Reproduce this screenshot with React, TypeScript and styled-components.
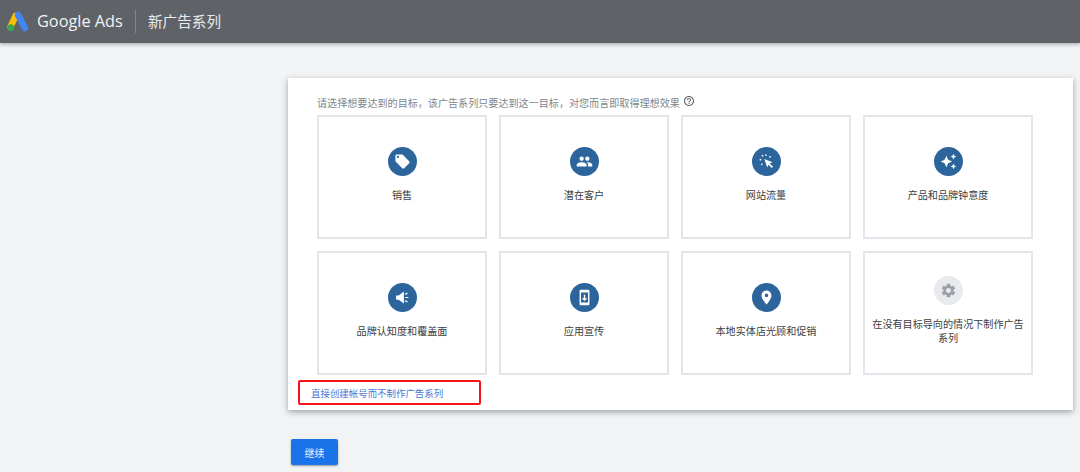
import React from "react";
import styled, { createGlobalStyle } from "styled-components";
import {
  MdLocalOffer,
  MdPeople,
  MdAutoAwesome,
  MdSystemUpdate,
  MdPlace,
  MdSettings,
  MdHelpOutline,
} from "react-icons/md";

const FONT = `Roboto, "Noto Sans CJK SC", sans-serif`;

const Global = createGlobalStyle`
  html, body { margin: 0; padding: 0; height: 100%; background: #f1f3f5; overflow: hidden; }
  body { font-family: ${FONT}; }
`;

const Page = styled.div`
  width: 1080px;
  height: 472px;
  overflow: hidden;
  background: #f1f3f5;
`;

const Header = styled.header`
  height: 43px;
  background: #5f6368;
  display: flex;
  align-items: center;
  padding-left: 7px;
  box-sizing: border-box;
  box-shadow: 0 1px 4px rgba(60, 64, 67, 0.45);
`;

const Logo = styled.svg`
  width: 22px;
  height: 21px;
  margin-right: 8px;
  margin-top: -1px;
`;

const Brand = styled.span`
  color: #f1f3f4;
  font-family: "Open Sans", ${FONT};
  font-size: 16.3px;
  line-height: 20px;
  width: 98px;
  white-space: nowrap;
  margin-top: -1px;
`;

const Divider = styled.div`
  width: 1px;
  height: 23px;
  background: #80868b;
  margin-right: 12px;
`;

const Title = styled.h1`
  margin: 0;
  color: #e8eaed;
  font-size: 14.6px;
  font-weight: 400;
  line-height: 20px;
  white-space: nowrap;
`;

const Main = styled.main`
  padding: 35px 0 0 288px;
`;

const Panel = styled.section`
  width: 785px;
  height: 332px;
  box-sizing: border-box;
  background: #fff;
  padding: 15px 0 0 10px;
  box-shadow: 0 2px 6px rgba(60, 64, 67, 0.45);
`;

const Prompt = styled.p`
  box-sizing: border-box;
  margin: 0 0 0 19px;
  height: 22px;
  padding-bottom: 4px;
  display: flex;
  align-items: center;
  gap: 3px;
  color: #80868b;
  font-size: 10.08px;
  white-space: nowrap;
  svg {
    width: 12px;
    height: 12px;
    color: #5f6368;
    margin-top: -2px;
  }
`;

const Grid = styled.div`
  margin: 0 0 0 19px;
  width: 716px;
  display: grid;
  grid-template-columns: repeat(4, 170px);
  grid-auto-rows: 124px;
  gap: 12px;
`;

const Tile = styled.button`
  box-sizing: border-box;
  border: 2px solid #e3e4ea;
  background: #fff;
  padding: 0 6px 5px;
  display: flex;
  flex-direction: column;
  align-items: center;
  justify-content: center;
  gap: 13px;
  font-family: ${FONT};
`;

const Badge = styled.span<{ $muted?: boolean }>`
  width: 29px;
  height: 29px;
  border-radius: 50%;
  flex: none;
  display: flex;
  align-items: center;
  justify-content: center;
  background: ${(p) => (p.$muted ? "#e8eaed" : "#2c659c")};
  color: ${(p) => (p.$muted ? "#9aa0a6" : "#fff")};
  svg {
    width: 17px;
    height: 17px;
  }
`;

const Label = styled.span`
  font-size: 10.1px;
  line-height: 14px;
  color: #3c4043;
  text-align: center;
`;

const LinkBox = styled.div`
  box-sizing: border-box;
  width: 183px;
  height: 25px;
  margin-top: 5px;
  padding-left: 11px;
  border: 2px solid #f5141a;
  border-radius: 2px;
  display: flex;
  align-items: center;
`;

const TextLink = styled.a`
  color: #4a76d4;
  font-size: 9.45px;
  white-space: nowrap;
  cursor: pointer;
`;

const Continue = styled.button`
  display: block;
  width: 47px;
  height: 26px;
  margin: 29px 0 0 3px;
  border: none;
  border-radius: 2px;
  background: #1a73e8;
  color: #e8f0fe;
  font-family: ${FONT};
  font-size: 10px;
  box-shadow: 0 1px 2px rgba(60, 64, 67, 0.5);
`;

const ClickIcon = () => (
  <svg viewBox="0 0 24 24" fill="currentColor" aria-hidden="true">
    <path d="M9 8.5 20.5 13l-4 1.8 4.7 4.7-1.7 1.7-4.7-4.7-1.8 4z" />
    <circle cx="3.4" cy="9.4" r="1.2" />
    <circle cx="5.4" cy="16" r="1.2" />
    <circle cx="6.4" cy="3.8" r="1.2" />
    <circle cx="11.2" cy="2.8" r="1.2" />
    <circle cx="17" cy="5.4" r="1.2" />
  </svg>
);

const SpeakerIcon = () => (
  <svg viewBox="0 0 24 24" fill="currentColor" aria-hidden="true">
    <path d="M3 9h3.5L14 3.5v17L6.5 15H3z" />
    <path d="M16 12h4.4M15.8 7.6l3.2-2M15.8 16.4l3.2 2" stroke="currentColor" strokeWidth="1.7" fill="none" />
  </svg>
);

const goals: { label: string; icon: React.ReactNode; muted?: boolean }[] = [
  { label: "销售", icon: <MdLocalOffer /> },
  { label: "潜在客户", icon: <MdPeople /> },
  { label: "网站流量", icon: <ClickIcon /> },
  { label: "产品和品牌钟意度", icon: <MdAutoAwesome /> },
  { label: "品牌认知度和覆盖面", icon: <SpeakerIcon /> },
  { label: "应用宣传", icon: <MdSystemUpdate /> },
  { label: "本地实体店光顾和促销", icon: <MdPlace /> },
  { label: "在没有目标导向的情况下制作广告系列", icon: <MdSettings />, muted: true },
];

export default function App() {
  return (
    <Page>
      <Global />
      <Header>
        <Logo viewBox="0 0 22 21" aria-hidden="true">
          <line x1="8.5" y1="5" x2="3.5" y2="16" stroke="#fbbc04" strokeWidth="6.5" strokeLinecap="round" />
          <line x1="11" y1="4" x2="18" y2="17" stroke="#4285f4" strokeWidth="6.5" strokeLinecap="round" />
          <circle cx="3.8" cy="16.8" r="3.5" fill="#34a853" />
        </Logo>
        <Brand>Google Ads</Brand>
        <Divider />
        <Title>新广告系列</Title>
      </Header>
      <Main>
        <Panel>
          <Prompt>
            请选择想要达到的目标，该广告系列只要达到这一目标，对您而言即取得理想效果
            <MdHelpOutline />
          </Prompt>
          <Grid>
            {goals.map((g) => (
              <Tile key={g.label}>
                <Badge $muted={g.muted}>{g.icon}</Badge>
                <Label>{g.label}</Label>
              </Tile>
            ))}
          </Grid>
          <LinkBox>
            <TextLink>直接创建帐号而不制作广告系列</TextLink>
          </LinkBox>
        </Panel>
        <Continue>继续</Continue>
      </Main>
    </Page>
  );
}
